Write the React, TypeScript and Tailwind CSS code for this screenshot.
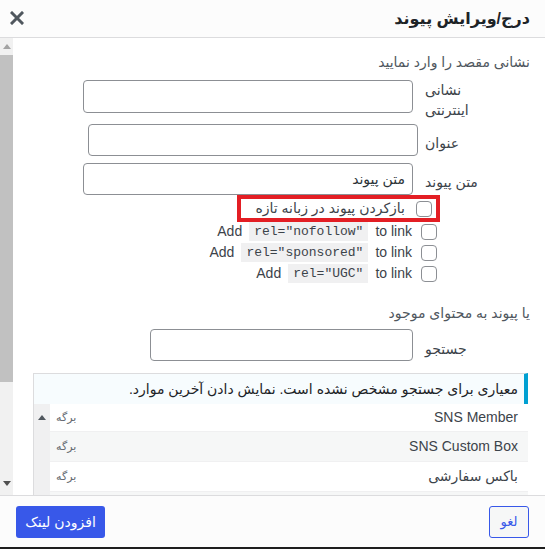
import React from "react";

const Box = () => (
  <span className="block h-[16px] w-[16px] shrink-0 rounded-[4px] border border-[#8c8f94] bg-white" />
);

const RelRow = ({ rel }: { rel: string }) => (
  <div className="flex h-[21px] items-center">
    <Box />
    <span className="mr-[9px] text-[14px] text-[#3c434a]">to link</span>
    <code
      dir="ltr"
      className="mr-[7px] bg-[#f0f0f1] px-[5px] py-[1px] font-['Liberation_Mono',monospace] text-[13px] leading-[17px] text-[#3c434a]"
    >
      {`rel="${rel}"`}
    </code>
    <span className="mr-[7px] text-[14px] text-[#3c434a]">Add</span>
  </div>
);

const Arrow = ({ up, color }: { up?: boolean; color: string }) => (
  <svg width="8" height="5" viewBox="0 0 8 5">
    <path d={up ? "M0 5 L4 0 L8 5 Z" : "M0 0 L4 5 L8 0 Z"} fill={color} />
  </svg>
);

const results = [
  { title: "SNS Member", h: "h-[28px]", bg: "bg-white" },
  { title: "SNS Custom Box", h: "h-[30px]", bg: "bg-[#f6f7f7]" },
  { title: "باکس سفارشی", h: "h-[30px]", bg: "bg-white" },
];

export default function App() {
  return (
    <div
      dir="rtl"
      className="flex h-[549px] w-[545px] flex-col overflow-hidden bg-white font-['Liberation_Sans','DejaVu_Sans',sans-serif] text-[#3c434a]"
    >
      {/* header */}
      <div className="flex h-[38px] shrink-0 items-center justify-between border-b border-[#dcdcde] bg-[#fcfcfc] pl-[10px] pr-[15px]">
        <h1 className="text-[16px] font-bold text-[#1d2327]">درج/ویرایش پیوند</h1>
        <svg width="14" height="14" viewBox="0 0 14 14" className="mb-[2px]">
          <path d="M2 2 L12 12 M12 2 L2 12" stroke="#50575e" strokeWidth="3" strokeLinecap="square" />
        </svg>
      </div>

      {/* body */}
      <div className="flex h-[457px] shrink-0 flex-row-reverse">
        <div className="flex w-[13px] shrink-0 flex-col items-center bg-[#f1f1f1]">
          <div className="flex h-[17px] items-center">
            <Arrow up color="#a3a3a3" />
          </div>
          <div className="h-[327px] w-full bg-[#c1c1c1]" />
          <div className="flex-1" />
          <div className="flex h-[14px] items-start">
            <Arrow color="#505050" />
          </div>
        </div>

        <div className="flex-1 pr-[15px]">
          <p className="mt-[14px] text-[14px] leading-[20px] text-[#50575e]">نشانی مقصد را وارد نمایید</p>

          <div className="mr-[25px] mt-[8px] flex items-start gap-[12px]">
            <span className="w-[80px] text-left text-[14px] leading-[20px]">
              نشانی
              <br />
              اینترنتی
            </span>
            <span className="h-[33px] w-[330px] rounded-[4px] border border-[#8c8f94] bg-white" />
          </div>

          <div className="mr-[25px] mt-[4px] flex items-center gap-[7px]">
            <span className="w-[80px] pt-[6px] text-left text-[14px] leading-[20px]">عنوان</span>
            <span className="h-[32px] w-[330px] rounded-[4px] border border-[#8c8f94] bg-white" />
          </div>

          <div className="mr-[25px] mt-[7px] flex items-center gap-[12px]">
            <span className="w-[80px] pt-[6px] text-left text-[14px] leading-[20px]">متن پیوند</span>
            <span className="flex h-[32px] w-[330px] items-center rounded-[4px] border border-[#8c8f94] bg-white pr-[7px] text-[14px] text-[#2c3338]">
              متن پیوند
            </span>
          </div>

          <div className="mr-[93px] flex flex-col items-start">
            <div className="-mr-[3px] flex h-[27px] w-[203px] items-center border-4 border-[#e31e24] pr-[4px]">
              <Box />
              <span className="mr-[11px] text-[14px] tracking-[0.5px] text-[#3c434a]">بازکردن پیوند در زبانه تازه</span>
            </div>
            <div className="-mt-[1px]">
              <RelRow rel="nofollow" />
              <RelRow rel="sponsored" />
              <RelRow rel="UGC" />
            </div>
          </div>

          <p className="mt-[19px] text-[14px] leading-[20px] text-[#50575e]">یا پیوند به محتوای موجود</p>

          <div className="mr-[25px] mt-[6px] flex items-center gap-[12px]">
            <span className="w-[80px] pt-[8px] text-left text-[14px] leading-[20px]">جستجو</span>
            <span className="h-[32px] w-[263px] rounded-[4px] border border-[#8c8f94] bg-white" />
          </div>

          <div className="ml-[20px] mr-[2px] mt-[12px] border-l border-[#dcdcde]">
            <div className="flex h-[31px] items-center border-r-4 border-t border-[#00a0d2] border-t-[#dcdcde] bg-[#f7fcfe] pr-[6px] text-[14px] text-[#1d2327]">
              معیاری برای جستجو مشخص نشده است. نمایش دادن آخرین موارد.
            </div>
            <div className="flex">
              <div className="flex-1">
                {results.map((r) => (
                  <div
                    key={r.title}
                    className={`flex ${r.h} ${r.bg} items-center justify-between border-b border-[#f0f0f1] pl-[6px] pr-[10px]`}
                  >
                    <span className="text-[14px] text-[#3c434a]">{r.title}</span>
                    <span className="text-[11px] text-[#646970]">برگه</span>
                  </div>
                ))}
                <div className="h-[4px] bg-[#f6f7f7]" />
              </div>
              <div className="flex w-[16px] shrink-0 justify-center bg-[#f0f0f1] pt-[11px]">
                <Arrow up color="#50575e" />
              </div>
            </div>
          </div>
        </div>
      </div>

      {/* footer */}
      <div className="flex h-[52px] shrink-0 items-start justify-between border-t border-[#dcdcde] bg-[#fcfcfc] px-[16px] pt-[10px]">
        <button className="flex h-[32px] w-[40px] items-center justify-center rounded-[3px] border border-[#3858e9] bg-[#f6f7f7] text-[13px] text-[#3858e9]">
          لغو
        </button>
        <button className="flex h-[32px] w-[89px] items-center justify-center rounded-[3px] bg-[#3858e9] text-[14px] text-white">
          افزودن لینک
        </button>
      </div>
      <div className="h-[2px] shrink-0 bg-[#1e1e1e]" />
    </div>
  );
}
